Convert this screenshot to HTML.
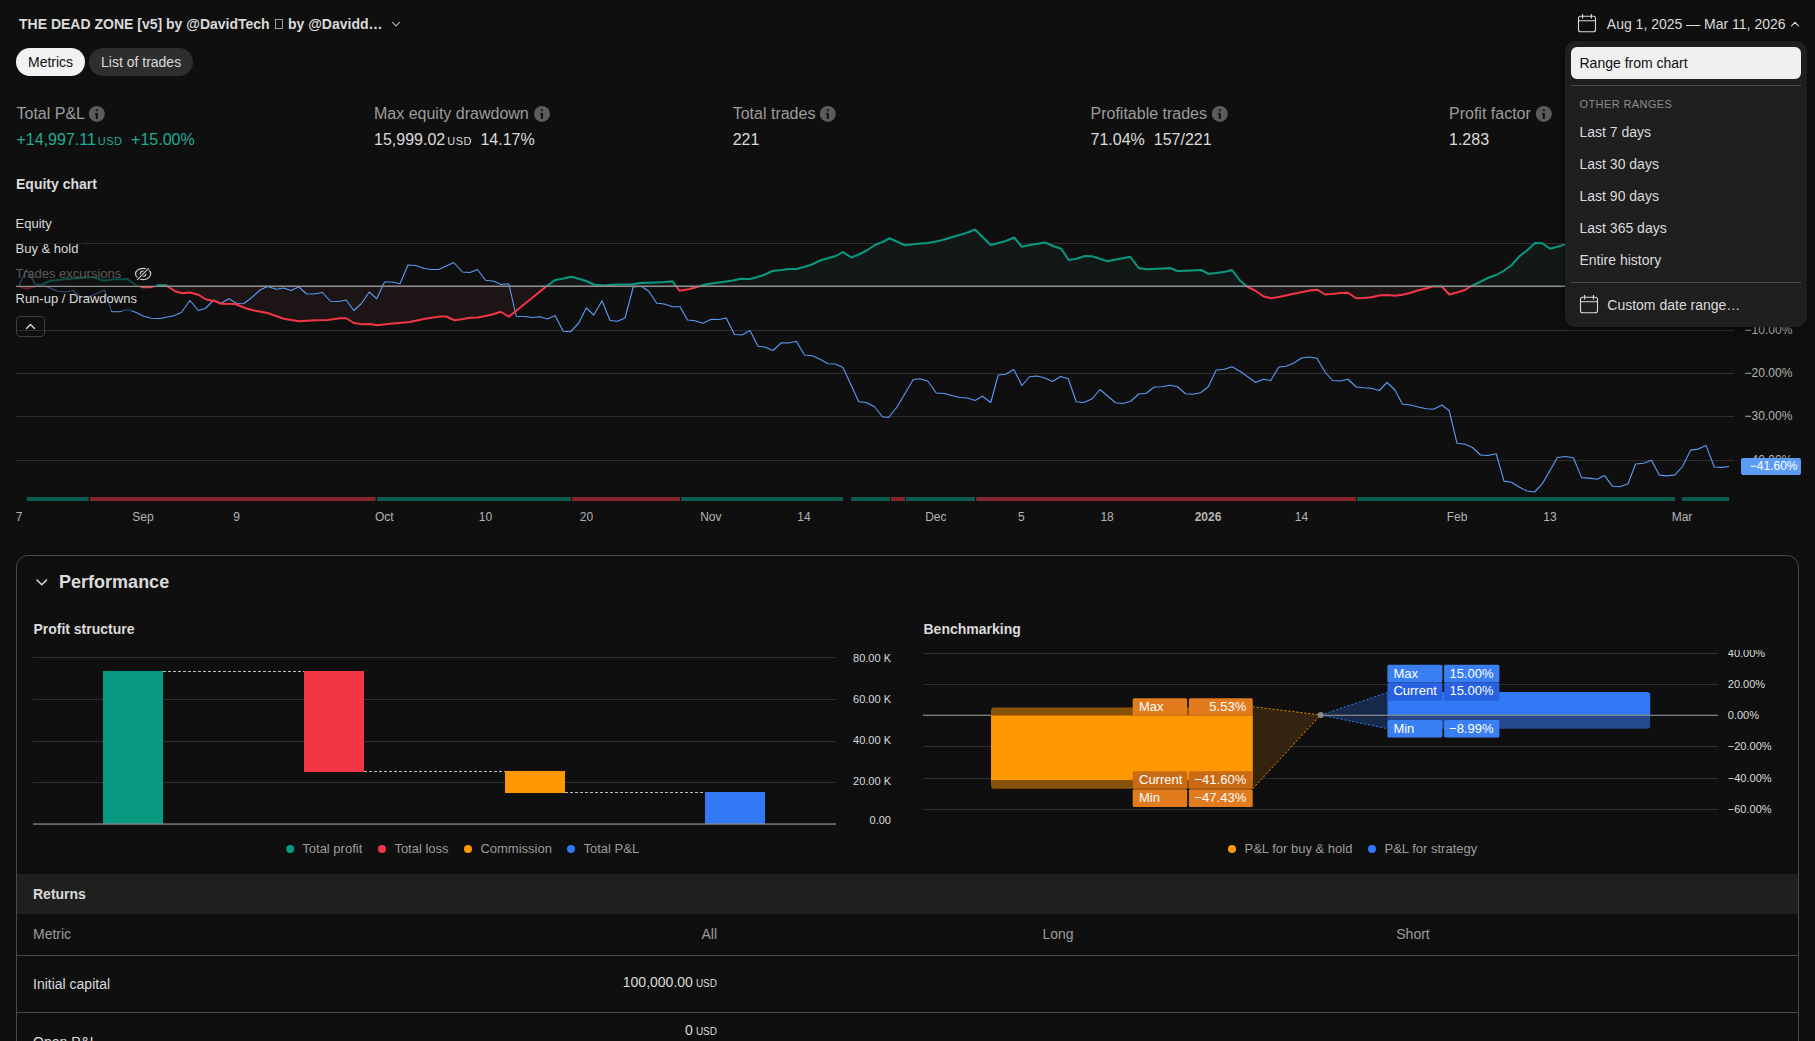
<!DOCTYPE html><html><head><meta charset="utf-8"><style>
html,body{margin:0;padding:0;background:#0f0f0f;width:1815px;height:1041px;overflow:hidden;font-family:"Liberation Sans", sans-serif;}
.t{position:absolute;white-space:nowrap;}
.abs{position:absolute;}
svg{position:absolute;left:0;top:0;}
</style></head><body>
<div class="t" style="left:19.00px;top:14.20px;font-size:14px;line-height:20px;color:#dbdbdb;font-weight:700;">THE DEAD ZONE [v5] by @DavidTech <span style="display:inline-block;width:8px;height:10px;border:1px solid #a0a0a0;box-sizing:border-box;vertical-align:0px;margin:0 1.5px 0 1px"></span> by @Davidd…</div>
<svg width="1815" height="1041" style="pointer-events:none"><path d="M392.5 22.3 L396 25.8 L399.5 22.3" fill="none" stroke="#b8b8b8" stroke-width="1.1" stroke-linecap="round" stroke-linejoin="round"/></svg>
<div class="abs" style="left:16px;top:48px;width:69px;height:28px;border-radius:14px;background:#f2f2f2"></div>
<div class="t" style="left:28.00px;top:52.00px;font-size:14px;line-height:20px;color:#0f0f0f;">Metrics</div>
<div class="abs" style="left:89px;top:48px;width:104px;height:28px;border-radius:14px;background:#2e2e2e"></div>
<div class="t" style="left:101.00px;top:52.00px;font-size:14px;line-height:20px;color:#dbdbdb;">List of trades</div>
<div class="t" style="left:16.50px;top:103.20px;font-size:16px;line-height:22px;color:#9c9c9c;">Total P&amp;L</div>
<svg width="1815" height="1041" style="pointer-events:none"><circle cx="96.80" cy="113.90" r="8" fill="#5b5b5b"/><path d="M95.00 113.10 H97.80 V118.90 H95.80 V114.50 H95.00 Z" fill="#0f0f0f"/><rect x="95.80" y="109.30" width="2" height="1.8" fill="#0f0f0f"/></svg>
<div class="t" style="left:374.00px;top:103.20px;font-size:16px;line-height:22px;color:#9c9c9c;">Max equity drawdown</div>
<svg width="1815" height="1041" style="pointer-events:none"><circle cx="542.00" cy="113.90" r="8" fill="#5b5b5b"/><path d="M540.20 113.10 H543.00 V118.90 H541.00 V114.50 H540.20 Z" fill="#0f0f0f"/><rect x="541.00" y="109.30" width="2" height="1.8" fill="#0f0f0f"/></svg>
<div class="t" style="left:732.70px;top:103.20px;font-size:16px;line-height:22px;color:#9c9c9c;">Total trades</div>
<svg width="1815" height="1041" style="pointer-events:none"><circle cx="827.80" cy="113.90" r="8" fill="#5b5b5b"/><path d="M826.00 113.10 H828.80 V118.90 H826.80 V114.50 H826.00 Z" fill="#0f0f0f"/><rect x="826.80" y="109.30" width="2" height="1.8" fill="#0f0f0f"/></svg>
<div class="t" style="left:1090.50px;top:103.20px;font-size:16px;line-height:22px;color:#9c9c9c;">Profitable trades</div>
<svg width="1815" height="1041" style="pointer-events:none"><circle cx="1219.80" cy="113.90" r="8" fill="#5b5b5b"/><path d="M1218.00 113.10 H1220.80 V118.90 H1218.80 V114.50 H1218.00 Z" fill="#0f0f0f"/><rect x="1218.80" y="109.30" width="2" height="1.8" fill="#0f0f0f"/></svg>
<div class="t" style="left:1449.00px;top:103.20px;font-size:16px;line-height:22px;color:#9c9c9c;">Profit factor</div>
<svg width="1815" height="1041" style="pointer-events:none"><circle cx="1543.80" cy="113.90" r="8" fill="#5b5b5b"/><path d="M1542.00 113.10 H1544.80 V118.90 H1542.80 V114.50 H1542.00 Z" fill="#0f0f0f"/><rect x="1542.80" y="109.30" width="2" height="1.8" fill="#0f0f0f"/></svg>
<div class="t" style="left:16.50px;top:129.00px;font-size:16px;line-height:22px;color:#22ab94;">+14,997.11<span style="font-size:11px;margin-left:2px;letter-spacing:0.5px">USD</span><span style="margin-left:8.5px">+15.00%</span></div>
<div class="t" style="left:374.00px;top:129.00px;font-size:16px;line-height:22px;color:#dbdbdb;">15,999.02<span style="font-size:11px;margin-left:2px;letter-spacing:0.5px">USD</span><span style="margin-left:8.5px">14.17%</span></div>
<div class="t" style="left:732.70px;top:129.00px;font-size:16px;line-height:22px;color:#dbdbdb;">221</div>
<div class="t" style="left:1090.50px;top:129.00px;font-size:16px;line-height:22px;color:#dbdbdb;">71.04%<span style="margin-left:9px">157/221</span></div>
<div class="t" style="left:1449.00px;top:129.00px;font-size:16px;line-height:22px;color:#dbdbdb;">1.283</div>
<div class="t" style="left:16.00px;top:174.00px;font-size:14px;line-height:20px;color:#dbdbdb;font-weight:700;">Equity chart</div>
<svg width="1815" height="1041"><defs><clipPath id="above"><rect x="0" y="0" width="1815" height="286.25"/></clipPath><clipPath id="below"><rect x="0" y="286.25" width="1815" height="400"/></clipPath></defs><rect x="16" y="243" width="1718" height="1" fill="#2e2e2e"/><rect x="16" y="330" width="1718" height="1" fill="#2e2e2e"/><rect x="16" y="373" width="1718" height="1" fill="#2e2e2e"/><rect x="16" y="416" width="1718" height="1" fill="#2e2e2e"/><rect x="16" y="460" width="1718" height="1" fill="#2e2e2e"/><polygon points="18.80,286.25 18.80,286.25 26.50,288.60 35.00,286.25 41.25,285.00 50.00,280.75 65.00,279.25 80.00,278.00 92.50,277.00 103.75,280.50 115.00,279.25 127.50,279.00 136.25,285.50 142.50,287.30 150.00,287.30 157.50,285.30 166.25,285.30 175.00,291.25 182.50,293.25 190.00,292.50 198.75,295.00 206.25,299.50 215.00,301.25 221.25,303.75 235.00,304.00 245.00,308.00 255.00,310.75 267.50,313.00 283.75,318.75 298.75,321.25 315.00,320.25 327.50,320.00 340.00,318.25 346.25,318.25 353.75,323.00 362.50,324.25 370.00,324.00 377.50,325.25 390.00,323.75 410.00,322.00 425.00,318.75 440.00,316.50 446.25,316.50 454.50,320.25 462.00,319.25 470.00,317.75 477.50,317.50 485.50,316.00 493.25,314.25 500.75,311.75 508.75,316.75 547.50,285.50 555.00,280.00 562.50,278.75 571.25,276.75 578.75,278.75 586.25,281.00 593.75,284.50 602.50,285.50 617.50,284.50 632.50,284.25 640.00,283.00 655.00,282.50 665.00,282.00 672.50,281.25 679.50,290.75 688.75,289.25 698.75,286.50 705.00,284.50 715.00,283.00 722.50,282.00 732.50,280.50 741.25,278.75 750.00,279.00 757.50,277.00 765.00,274.50 772.50,271.00 781.25,270.00 788.75,269.00 796.25,269.00 805.00,266.75 812.50,264.25 820.00,260.50 828.75,258.00 836.25,255.75 843.00,252.00 851.25,257.50 858.75,254.50 866.25,250.75 875.00,245.00 882.50,242.00 889.50,238.25 905.00,245.25 917.50,243.75 927.50,243.00 935.00,241.75 942.50,240.00 952.50,237.00 966.25,233.00 975.00,229.50 990.75,245.00 1005.00,241.25 1014.25,237.50 1021.75,246.75 1030.00,245.00 1045.00,242.50 1053.75,246.25 1061.25,248.75 1068.75,260.00 1076.25,258.75 1085.00,256.00 1092.00,256.25 1107.50,261.25 1130.00,256.75 1138.75,268.00 1146.25,269.25 1162.50,268.50 1170.00,268.00 1177.50,271.00 1186.25,270.75 1201.25,270.00 1208.75,274.00 1225.00,271.75 1232.00,270.00 1240.00,280.50 1247.00,286.50 1255.00,290.50 1263.75,296.50 1271.25,298.25 1280.00,296.75 1295.00,293.50 1310.00,290.50 1317.50,289.75 1325.00,294.50 1332.50,294.00 1340.00,293.00 1348.00,292.75 1356.25,298.25 1363.75,298.00 1371.25,297.25 1379.25,295.50 1387.00,295.00 1395.00,295.75 1402.50,294.75 1410.00,293.00 1417.50,290.50 1425.00,288.75 1433.75,286.25 1441.75,286.50 1449.25,294.50 1457.00,292.50 1465.00,290.00 1470.00,286.75 1480.00,282.00 1488.75,277.50 1496.25,275.00 1503.75,270.75 1511.25,265.50 1520.00,255.75 1527.50,250.00 1535.00,243.00 1542.50,243.25 1550.00,248.75 1565.00,244.50 1600.00,240.00 1650.00,236.00 1700.00,232.00 1729.00,234.00 1729.00,286.25" fill="#111816" clip-path="url(#above)"/><polygon points="18.80,286.25 18.80,286.25 26.50,288.60 35.00,286.25 41.25,285.00 50.00,280.75 65.00,279.25 80.00,278.00 92.50,277.00 103.75,280.50 115.00,279.25 127.50,279.00 136.25,285.50 142.50,287.30 150.00,287.30 157.50,285.30 166.25,285.30 175.00,291.25 182.50,293.25 190.00,292.50 198.75,295.00 206.25,299.50 215.00,301.25 221.25,303.75 235.00,304.00 245.00,308.00 255.00,310.75 267.50,313.00 283.75,318.75 298.75,321.25 315.00,320.25 327.50,320.00 340.00,318.25 346.25,318.25 353.75,323.00 362.50,324.25 370.00,324.00 377.50,325.25 390.00,323.75 410.00,322.00 425.00,318.75 440.00,316.50 446.25,316.50 454.50,320.25 462.00,319.25 470.00,317.75 477.50,317.50 485.50,316.00 493.25,314.25 500.75,311.75 508.75,316.75 547.50,285.50 555.00,280.00 562.50,278.75 571.25,276.75 578.75,278.75 586.25,281.00 593.75,284.50 602.50,285.50 617.50,284.50 632.50,284.25 640.00,283.00 655.00,282.50 665.00,282.00 672.50,281.25 679.50,290.75 688.75,289.25 698.75,286.50 705.00,284.50 715.00,283.00 722.50,282.00 732.50,280.50 741.25,278.75 750.00,279.00 757.50,277.00 765.00,274.50 772.50,271.00 781.25,270.00 788.75,269.00 796.25,269.00 805.00,266.75 812.50,264.25 820.00,260.50 828.75,258.00 836.25,255.75 843.00,252.00 851.25,257.50 858.75,254.50 866.25,250.75 875.00,245.00 882.50,242.00 889.50,238.25 905.00,245.25 917.50,243.75 927.50,243.00 935.00,241.75 942.50,240.00 952.50,237.00 966.25,233.00 975.00,229.50 990.75,245.00 1005.00,241.25 1014.25,237.50 1021.75,246.75 1030.00,245.00 1045.00,242.50 1053.75,246.25 1061.25,248.75 1068.75,260.00 1076.25,258.75 1085.00,256.00 1092.00,256.25 1107.50,261.25 1130.00,256.75 1138.75,268.00 1146.25,269.25 1162.50,268.50 1170.00,268.00 1177.50,271.00 1186.25,270.75 1201.25,270.00 1208.75,274.00 1225.00,271.75 1232.00,270.00 1240.00,280.50 1247.00,286.50 1255.00,290.50 1263.75,296.50 1271.25,298.25 1280.00,296.75 1295.00,293.50 1310.00,290.50 1317.50,289.75 1325.00,294.50 1332.50,294.00 1340.00,293.00 1348.00,292.75 1356.25,298.25 1363.75,298.00 1371.25,297.25 1379.25,295.50 1387.00,295.00 1395.00,295.75 1402.50,294.75 1410.00,293.00 1417.50,290.50 1425.00,288.75 1433.75,286.25 1441.75,286.50 1449.25,294.50 1457.00,292.50 1465.00,290.00 1470.00,286.75 1480.00,282.00 1488.75,277.50 1496.25,275.00 1503.75,270.75 1511.25,265.50 1520.00,255.75 1527.50,250.00 1535.00,243.00 1542.50,243.25 1550.00,248.75 1565.00,244.50 1600.00,240.00 1650.00,236.00 1700.00,232.00 1729.00,234.00 1729.00,286.25" fill="#1c1415" clip-path="url(#below)"/><polyline points="18.80,286.25 26.50,269.80 35.00,283.75 41.25,285.00 48.75,287.50 57.50,291.25 65.00,292.00 72.50,290.50 80.00,296.25 86.25,297.50 96.25,293.75 104.50,290.00 111.75,311.75 118.75,311.75 128.00,309.50 136.25,312.50 143.75,316.25 151.25,318.25 160.00,318.50 173.75,315.75 181.25,312.50 190.00,300.50 198.25,310.50 205.50,308.25 213.75,300.00 221.25,303.25 228.75,298.75 237.50,303.75 243.75,303.50 251.25,298.00 260.00,290.00 267.50,286.50 276.25,289.25 283.75,288.00 291.25,290.50 298.75,286.75 306.25,293.75 313.75,294.00 322.50,292.50 330.50,301.25 338.75,301.50 346.25,300.00 353.75,310.50 361.25,303.75 369.25,292.00 376.75,298.75 384.50,282.00 392.50,282.00 400.00,283.75 408.00,265.00 415.50,265.50 423.75,268.25 431.25,269.50 438.75,269.50 453.75,262.50 462.50,272.00 470.00,272.50 477.50,269.50 485.50,280.25 493.75,281.25 501.25,284.50 508.75,283.75 516.25,316.25 525.00,316.50 532.50,317.50 540.00,316.75 547.50,319.00 555.00,315.50 563.25,331.25 570.50,331.75 578.75,323.00 586.25,308.00 593.75,315.00 602.00,300.75 610.00,320.50 617.50,321.25 625.00,318.00 633.25,287.00 641.25,286.25 648.75,291.25 656.75,303.25 664.25,304.00 672.50,306.75 680.00,306.75 687.50,320.00 695.00,320.75 703.00,323.25 711.25,319.25 718.75,319.50 726.25,318.00 734.50,334.50 742.00,335.00 750.00,330.50 758.00,346.25 765.50,347.25 773.00,350.50 781.25,342.75 788.75,343.00 796.25,341.25 804.50,355.00 812.50,355.75 820.00,359.25 828.00,363.75 835.50,364.00 843.00,367.50 858.75,401.75 866.25,402.50 874.50,406.75 882.50,416.75 888.75,417.50 897.00,407.00 913.25,379.50 920.00,378.75 928.00,381.25 936.25,393.00 944.50,393.50 952.50,395.75 960.00,397.50 967.50,398.00 975.00,400.50 982.50,396.25 990.75,402.50 998.25,375.00 1005.75,374.25 1013.75,369.50 1022.00,385.50 1029.50,376.75 1037.00,376.00 1045.00,378.00 1052.50,381.50 1060.50,376.50 1068.25,378.75 1076.25,401.75 1083.75,402.50 1092.00,399.00 1100.00,389.50 1115.50,402.75 1123.00,403.50 1130.75,401.25 1138.75,394.00 1146.25,393.25 1154.25,387.00 1161.75,386.75 1170.00,385.25 1177.50,386.75 1185.50,393.75 1193.00,394.25 1200.75,392.75 1208.25,386.75 1216.25,370.00 1223.75,369.50 1232.00,366.75 1240.00,371.25 1255.75,382.50 1263.25,379.25 1270.75,380.50 1278.75,367.00 1286.25,366.25 1294.25,362.75 1302.00,357.75 1309.50,357.00 1317.00,358.25 1325.00,372.00 1332.50,380.50 1340.00,381.00 1348.00,379.25 1356.25,387.00 1363.75,387.75 1371.25,388.25 1379.25,390.50 1387.00,382.50 1395.00,390.00 1402.50,404.25 1410.50,405.00 1418.25,407.00 1426.25,408.75 1433.75,409.25 1441.75,405.00 1449.25,410.75 1457.00,443.25 1465.00,444.25 1472.50,447.50 1480.50,455.00 1488.00,455.50 1496.25,453.75 1504.00,481.10 1511.40,482.30 1519.60,487.30 1527.00,491.00 1534.50,492.00 1542.40,483.60 1557.50,457.50 1565.50,456.50 1573.40,457.80 1581.60,477.60 1589.50,478.10 1597.00,479.30 1604.60,475.60 1612.60,486.30 1620.00,486.80 1628.00,483.80 1635.60,464.00 1643.60,463.20 1651.50,460.30 1659.20,475.10 1667.10,475.90 1675.10,474.90 1682.50,466.50 1690.70,450.10 1698.10,449.10 1706.00,445.40 1714.30,467.00 1721.70,467.40 1729.10,466.50" fill="none" stroke="#5b9cf6" stroke-width="1.1" stroke-linejoin="round"/><polyline points="18.80,286.25 26.50,288.60 35.00,286.25 41.25,285.00 50.00,280.75 65.00,279.25 80.00,278.00 92.50,277.00 103.75,280.50 115.00,279.25 127.50,279.00 136.25,285.50 142.50,287.30 150.00,287.30 157.50,285.30 166.25,285.30 175.00,291.25 182.50,293.25 190.00,292.50 198.75,295.00 206.25,299.50 215.00,301.25 221.25,303.75 235.00,304.00 245.00,308.00 255.00,310.75 267.50,313.00 283.75,318.75 298.75,321.25 315.00,320.25 327.50,320.00 340.00,318.25 346.25,318.25 353.75,323.00 362.50,324.25 370.00,324.00 377.50,325.25 390.00,323.75 410.00,322.00 425.00,318.75 440.00,316.50 446.25,316.50 454.50,320.25 462.00,319.25 470.00,317.75 477.50,317.50 485.50,316.00 493.25,314.25 500.75,311.75 508.75,316.75 547.50,285.50 555.00,280.00 562.50,278.75 571.25,276.75 578.75,278.75 586.25,281.00 593.75,284.50 602.50,285.50 617.50,284.50 632.50,284.25 640.00,283.00 655.00,282.50 665.00,282.00 672.50,281.25 679.50,290.75 688.75,289.25 698.75,286.50 705.00,284.50 715.00,283.00 722.50,282.00 732.50,280.50 741.25,278.75 750.00,279.00 757.50,277.00 765.00,274.50 772.50,271.00 781.25,270.00 788.75,269.00 796.25,269.00 805.00,266.75 812.50,264.25 820.00,260.50 828.75,258.00 836.25,255.75 843.00,252.00 851.25,257.50 858.75,254.50 866.25,250.75 875.00,245.00 882.50,242.00 889.50,238.25 905.00,245.25 917.50,243.75 927.50,243.00 935.00,241.75 942.50,240.00 952.50,237.00 966.25,233.00 975.00,229.50 990.75,245.00 1005.00,241.25 1014.25,237.50 1021.75,246.75 1030.00,245.00 1045.00,242.50 1053.75,246.25 1061.25,248.75 1068.75,260.00 1076.25,258.75 1085.00,256.00 1092.00,256.25 1107.50,261.25 1130.00,256.75 1138.75,268.00 1146.25,269.25 1162.50,268.50 1170.00,268.00 1177.50,271.00 1186.25,270.75 1201.25,270.00 1208.75,274.00 1225.00,271.75 1232.00,270.00 1240.00,280.50 1247.00,286.50 1255.00,290.50 1263.75,296.50 1271.25,298.25 1280.00,296.75 1295.00,293.50 1310.00,290.50 1317.50,289.75 1325.00,294.50 1332.50,294.00 1340.00,293.00 1348.00,292.75 1356.25,298.25 1363.75,298.00 1371.25,297.25 1379.25,295.50 1387.00,295.00 1395.00,295.75 1402.50,294.75 1410.00,293.00 1417.50,290.50 1425.00,288.75 1433.75,286.25 1441.75,286.50 1449.25,294.50 1457.00,292.50 1465.00,290.00 1470.00,286.75 1480.00,282.00 1488.75,277.50 1496.25,275.00 1503.75,270.75 1511.25,265.50 1520.00,255.75 1527.50,250.00 1535.00,243.00 1542.50,243.25 1550.00,248.75 1565.00,244.50 1600.00,240.00 1650.00,236.00 1700.00,232.00 1729.00,234.00" fill="none" stroke="#089981" stroke-width="2" stroke-linejoin="round" clip-path="url(#above)"/><polyline points="18.80,286.25 26.50,288.60 35.00,286.25 41.25,285.00 50.00,280.75 65.00,279.25 80.00,278.00 92.50,277.00 103.75,280.50 115.00,279.25 127.50,279.00 136.25,285.50 142.50,287.30 150.00,287.30 157.50,285.30 166.25,285.30 175.00,291.25 182.50,293.25 190.00,292.50 198.75,295.00 206.25,299.50 215.00,301.25 221.25,303.75 235.00,304.00 245.00,308.00 255.00,310.75 267.50,313.00 283.75,318.75 298.75,321.25 315.00,320.25 327.50,320.00 340.00,318.25 346.25,318.25 353.75,323.00 362.50,324.25 370.00,324.00 377.50,325.25 390.00,323.75 410.00,322.00 425.00,318.75 440.00,316.50 446.25,316.50 454.50,320.25 462.00,319.25 470.00,317.75 477.50,317.50 485.50,316.00 493.25,314.25 500.75,311.75 508.75,316.75 547.50,285.50 555.00,280.00 562.50,278.75 571.25,276.75 578.75,278.75 586.25,281.00 593.75,284.50 602.50,285.50 617.50,284.50 632.50,284.25 640.00,283.00 655.00,282.50 665.00,282.00 672.50,281.25 679.50,290.75 688.75,289.25 698.75,286.50 705.00,284.50 715.00,283.00 722.50,282.00 732.50,280.50 741.25,278.75 750.00,279.00 757.50,277.00 765.00,274.50 772.50,271.00 781.25,270.00 788.75,269.00 796.25,269.00 805.00,266.75 812.50,264.25 820.00,260.50 828.75,258.00 836.25,255.75 843.00,252.00 851.25,257.50 858.75,254.50 866.25,250.75 875.00,245.00 882.50,242.00 889.50,238.25 905.00,245.25 917.50,243.75 927.50,243.00 935.00,241.75 942.50,240.00 952.50,237.00 966.25,233.00 975.00,229.50 990.75,245.00 1005.00,241.25 1014.25,237.50 1021.75,246.75 1030.00,245.00 1045.00,242.50 1053.75,246.25 1061.25,248.75 1068.75,260.00 1076.25,258.75 1085.00,256.00 1092.00,256.25 1107.50,261.25 1130.00,256.75 1138.75,268.00 1146.25,269.25 1162.50,268.50 1170.00,268.00 1177.50,271.00 1186.25,270.75 1201.25,270.00 1208.75,274.00 1225.00,271.75 1232.00,270.00 1240.00,280.50 1247.00,286.50 1255.00,290.50 1263.75,296.50 1271.25,298.25 1280.00,296.75 1295.00,293.50 1310.00,290.50 1317.50,289.75 1325.00,294.50 1332.50,294.00 1340.00,293.00 1348.00,292.75 1356.25,298.25 1363.75,298.00 1371.25,297.25 1379.25,295.50 1387.00,295.00 1395.00,295.75 1402.50,294.75 1410.00,293.00 1417.50,290.50 1425.00,288.75 1433.75,286.25 1441.75,286.50 1449.25,294.50 1457.00,292.50 1465.00,290.00 1470.00,286.75 1480.00,282.00 1488.75,277.50 1496.25,275.00 1503.75,270.75 1511.25,265.50 1520.00,255.75 1527.50,250.00 1535.00,243.00 1542.50,243.25 1550.00,248.75 1565.00,244.50 1600.00,240.00 1650.00,236.00 1700.00,232.00 1729.00,234.00" fill="none" stroke="#f23645" stroke-width="2" stroke-linejoin="round" clip-path="url(#below)"/><rect x="16" y="285.45" width="1718" height="1.6" fill="#8f8f8f"/><rect x="26.80" y="497" width="62.00" height="4" fill="#0b5c4e"/><rect x="90.00" y="497" width="285.60" height="4" fill="#86242d"/><rect x="376.90" y="497" width="194.10" height="4" fill="#0b5c4e"/><rect x="572.00" y="497" width="108.10" height="4" fill="#86242d"/><rect x="681.10" y="497" width="161.90" height="4" fill="#0b5c4e"/><rect x="851.20" y="497" width="38.80" height="4" fill="#0b5c4e"/><rect x="890.90" y="497" width="14.10" height="4" fill="#86242d"/><rect x="906.00" y="497" width="69.00" height="4" fill="#0b5c4e"/><rect x="976.20" y="497" width="379.80" height="4" fill="#86242d"/><rect x="1357.00" y="497" width="318.00" height="4" fill="#0b5c4e"/><rect x="1682.00" y="497" width="47.00" height="4" fill="#0b5c4e"/></svg>
<div class="abs" style="left:6px;top:236.5px;width:76px;height:24px;background:rgba(15,15,15,0.55)"></div>
<div class="abs" style="left:6px;top:261.5px;width:151px;height:24px;background:rgba(15,15,15,0.55)"></div>
<div class="abs" style="left:6px;top:286.7px;width:135px;height:24px;background:rgba(15,15,15,0.55)"></div>
<div class="t" style="left:15.50px;top:214.60px;font-size:13px;line-height:18px;color:#dbdbdb;">Equity</div>
<div class="t" style="left:15.50px;top:239.50px;font-size:13px;line-height:18px;color:#dbdbdb;">Buy &amp; hold</div>
<div class="t" style="left:15.50px;top:264.50px;font-size:13px;line-height:18px;color:#5a5a5a;">Trades excursions</div>
<div class="t" style="left:15.50px;top:289.70px;font-size:13px;line-height:18px;color:#dbdbdb;">Run-up / Drawdowns</div>
<svg width="1815" height="1041"><g fill="none" stroke="#c8c8c8" stroke-width="1.2" stroke-linecap="round"><ellipse cx="143.1" cy="274" rx="7.6" ry="5.6"/><circle cx="143" cy="273.8" r="2.7"/></g><path d="M137.4 279.6 L148.6 268.4" stroke="#0f0f0f" stroke-width="3.2"/><path d="M137.4 279.6 L148.6 268.4" stroke="#c8c8c8" stroke-width="1.2" stroke-linecap="round"/></svg>
<div class="abs" style="left:16px;top:316px;width:29px;height:21px;box-sizing:border-box;border:1px solid #3d3d3d;border-radius:4px;"></div>
<svg width="1815" height="1041"><path d="M26.5 328.5 L30.5 324.5 L34.5 328.5" fill="none" stroke="#dbdbdb" stroke-width="1.4" stroke-linecap="round" stroke-linejoin="round"/></svg>
<div class="t" style="left:1744.60px;top:322.20px;font-size:12px;line-height:17px;color:#b4b4b4;">−10.00%</div>
<div class="t" style="left:1744.60px;top:365.20px;font-size:12px;line-height:17px;color:#b4b4b4;">−20.00%</div>
<div class="t" style="left:1744.60px;top:408.30px;font-size:12px;line-height:17px;color:#b4b4b4;">−30.00%</div>
<div class="t" style="left:1744.60px;top:452.20px;font-size:12px;line-height:17px;color:#b4b4b4;">−40.00%</div>
<div class="abs" style="left:1741px;top:458px;width:60px;height:17px;background:#5b9cf6;border-radius:2px"></div>
<div class="t" style="right:17.50px;top:458.00px;font-size:12px;line-height:17px;color:#ffffff;">−41.60%</div>
<div class="t" style="left:19.10px;transform:translateX(-50%);top:508.70px;font-size:12px;line-height:17px;color:#b4b4b4;">7</div>
<div class="t" style="left:143.00px;transform:translateX(-50%);top:508.70px;font-size:12px;line-height:17px;color:#b4b4b4;">Sep</div>
<div class="t" style="left:236.50px;transform:translateX(-50%);top:508.70px;font-size:12px;line-height:17px;color:#b4b4b4;">9</div>
<div class="t" style="left:384.30px;transform:translateX(-50%);top:508.70px;font-size:12px;line-height:17px;color:#b4b4b4;">Oct</div>
<div class="t" style="left:485.50px;transform:translateX(-50%);top:508.70px;font-size:12px;line-height:17px;color:#b4b4b4;">10</div>
<div class="t" style="left:586.40px;transform:translateX(-50%);top:508.70px;font-size:12px;line-height:17px;color:#b4b4b4;">20</div>
<div class="t" style="left:710.80px;transform:translateX(-50%);top:508.70px;font-size:12px;line-height:17px;color:#b4b4b4;">Nov</div>
<div class="t" style="left:804.00px;transform:translateX(-50%);top:508.70px;font-size:12px;line-height:17px;color:#b4b4b4;">14</div>
<div class="t" style="left:935.80px;transform:translateX(-50%);top:508.70px;font-size:12px;line-height:17px;color:#b4b4b4;">Dec</div>
<div class="t" style="left:1021.30px;transform:translateX(-50%);top:508.70px;font-size:12px;line-height:17px;color:#b4b4b4;">5</div>
<div class="t" style="left:1107.10px;transform:translateX(-50%);top:508.70px;font-size:12px;line-height:17px;color:#b4b4b4;">18</div>
<div class="t" style="left:1208.00px;transform:translateX(-50%);top:508.70px;font-size:12px;line-height:17px;color:#b4b4b4;font-weight:700;">2026</div>
<div class="t" style="left:1301.50px;transform:translateX(-50%);top:508.70px;font-size:12px;line-height:17px;color:#b4b4b4;">14</div>
<div class="t" style="left:1457.00px;transform:translateX(-50%);top:508.70px;font-size:12px;line-height:17px;color:#b4b4b4;">Feb</div>
<div class="t" style="left:1550.00px;transform:translateX(-50%);top:508.70px;font-size:12px;line-height:17px;color:#b4b4b4;">13</div>
<div class="t" style="left:1682.00px;transform:translateX(-50%);top:508.70px;font-size:12px;line-height:17px;color:#b4b4b4;">Mar</div>
<svg width="1815" height="1041"><g fill="none" stroke="#dbdbdb" stroke-width="1.1"><rect x="1578.5" y="16.3" width="17" height="15.5" rx="2"/><path d="M1578.5 20.8 H1595.5 M1582.6 14.0 V18.5 M1591.4 14.0 V18.5"/></g><path d="M1791.5 25.8 L1795 22.3 L1798.5 25.8" fill="none" stroke="#dbdbdb" stroke-width="1.1" stroke-linecap="round" stroke-linejoin="round"/></svg>
<div class="t" style="left:1606.80px;top:14.10px;font-size:14px;line-height:20px;color:#dbdbdb;">Aug 1, 2025 — Mar 11, 2026</div>
<div class="abs" style="left:1565px;top:41px;width:242px;height:286px;background:#1f1f1f;border-radius:10px;box-shadow:0 2px 8px rgba(0,0,0,0.4)"></div>
<div class="abs" style="left:1571px;top:47px;width:230px;height:32px;background:#f0f0f0;border-radius:6px"></div>
<div class="t" style="left:1579.50px;top:52.70px;font-size:14px;line-height:20px;color:#0f0f0f;">Range from chart</div>
<div class="abs" style="left:1571px;top:85px;width:230px;height:1px;background:#4a4a4a"></div>
<div class="t" style="left:1579.50px;top:96.50px;font-size:11px;line-height:15px;color:#8c8c8c;letter-spacing:0.4px;">OTHER RANGES</div>
<div class="t" style="left:1579.50px;top:121.90px;font-size:14px;line-height:20px;color:#dbdbdb;">Last 7 days</div>
<div class="t" style="left:1579.50px;top:154.00px;font-size:14px;line-height:20px;color:#dbdbdb;">Last 30 days</div>
<div class="t" style="left:1579.50px;top:185.50px;font-size:14px;line-height:20px;color:#dbdbdb;">Last 90 days</div>
<div class="t" style="left:1579.50px;top:218.20px;font-size:14px;line-height:20px;color:#dbdbdb;">Last 365 days</div>
<div class="t" style="left:1579.50px;top:250.00px;font-size:14px;line-height:20px;color:#dbdbdb;">Entire history</div>
<div class="abs" style="left:1571px;top:282px;width:230px;height:1px;background:#4a4a4a"></div>
<svg width="1815" height="1041"><g fill="none" stroke="#dbdbdb" stroke-width="1.1"><rect x="1580.5" y="297.3" width="17" height="15.5" rx="2"/><path d="M1580.5 301.8 H1597.5 M1584.6 295.0 V299.5 M1593.4 295.0 V299.5"/></g></svg>
<div class="t" style="left:1607.30px;top:295.30px;font-size:14px;line-height:20px;color:#dbdbdb;">Custom date range…</div>
<div class="abs" style="left:16px;top:555px;width:1783px;height:600px;box-sizing:border-box;border:1px solid #4a4a4a;border-radius:12px"></div>
<svg width="1815" height="1041"><path d="M37 580 L41.8 584.8 L46.6 580" fill="none" stroke="#dbdbdb" stroke-width="1.5" stroke-linecap="round" stroke-linejoin="round"/></svg>
<div class="t" style="left:59.10px;top:570.40px;font-size:18px;line-height:25px;color:#dbdbdb;font-weight:700;">Performance</div>
<div class="t" style="left:33.40px;top:619.10px;font-size:14px;line-height:20px;color:#dbdbdb;font-weight:700;">Profit structure</div>
<div class="t" style="left:923.50px;top:619.10px;font-size:14px;line-height:20px;color:#dbdbdb;font-weight:700;">Benchmarking</div>
<svg width="1815" height="1041"><rect x="33" y="657" width="803" height="1" fill="#2e2e2e"/><rect x="33" y="699" width="803" height="1" fill="#2e2e2e"/><rect x="33" y="741" width="803" height="1" fill="#2e2e2e"/><rect x="33" y="782" width="803" height="1" fill="#2e2e2e"/><rect x="103" y="671" width="60" height="153" fill="#089981"/><rect x="304" y="671" width="60" height="101" fill="#f23645"/><rect x="505" y="771" width="60" height="22" fill="#ff9800"/><rect x="705" y="792" width="60" height="32" fill="#3179f5"/><line x1="163" y1="671.5" x2="304" y2="671.5" stroke="#bdbdbd" stroke-width="1" stroke-dasharray="3 2"/><line x1="364" y1="771.5" x2="505" y2="771.5" stroke="#bdbdbd" stroke-width="1" stroke-dasharray="3 2"/><line x1="565" y1="792.5" x2="705" y2="792.5" stroke="#bdbdbd" stroke-width="1" stroke-dasharray="3 2"/><rect x="33" y="823.4" width="803" height="1.3" fill="#8a8a8a"/></svg>
<div class="t" style="right:924.00px;top:650.80px;font-size:11px;line-height:15px;color:#dbdbdb;">80.00 K</div>
<div class="t" style="right:924.00px;top:691.70px;font-size:11px;line-height:15px;color:#dbdbdb;">60.00 K</div>
<div class="t" style="right:924.00px;top:733.00px;font-size:11px;line-height:15px;color:#dbdbdb;">40.00 K</div>
<div class="t" style="right:924.00px;top:774.00px;font-size:11px;line-height:15px;color:#dbdbdb;">20.00 K</div>
<div class="t" style="right:924.00px;top:812.60px;font-size:11px;line-height:15px;color:#dbdbdb;">0.00</div>
<svg width="1815" height="1041"><circle cx="290.2" cy="849" r="4" fill="#089981"/><circle cx="382" cy="849" r="4" fill="#f23645"/><circle cx="468" cy="849" r="4" fill="#ff9800"/><circle cx="571" cy="849" r="4" fill="#3179f5"/></svg>
<div class="t" style="left:302.30px;top:839.50px;font-size:13px;line-height:18px;color:#9c9c9c;">Total profit</div>
<div class="t" style="left:394.40px;top:839.50px;font-size:13px;line-height:18px;color:#9c9c9c;">Total loss</div>
<div class="t" style="left:480.40px;top:839.50px;font-size:13px;line-height:18px;color:#9c9c9c;">Commission</div>
<div class="t" style="left:583.50px;top:839.50px;font-size:13px;line-height:18px;color:#9c9c9c;">Total P&amp;L</div>
<svg width="1815" height="1041"><rect x="923" y="653" width="795" height="1" fill="#2e2e2e"/><rect x="923" y="684" width="795" height="1" fill="#2e2e2e"/><rect x="923" y="746" width="795" height="1" fill="#2e2e2e"/><rect x="923" y="778" width="795" height="1" fill="#2e2e2e"/><rect x="923" y="809" width="795" height="1" fill="#2e2e2e"/><polygon points="1387.4,692.5 1321,715 1387.4,728.7" fill="#172a4a"/><path d="M1387.4 715 H1650.2 V725.7 Q1650.2 728.7 1647.2 728.7 H1390.4 Q1387.4 728.7 1387.4 725.7 Z" fill="#234a8c"/><path d="M1387.4 715 V695 Q1387.4 692 1390.4 692 H1647.2 Q1650.2 692 1650.2 695 V715 Z" fill="#3179f5"/><line x1="1321" y1="715" x2="1387.4" y2="692.5" stroke="#3179f5" stroke-width="1" stroke-dasharray="2 2"/><line x1="1321" y1="715" x2="1387.4" y2="728.7" stroke="#3179f5" stroke-width="1" stroke-dasharray="2 2"/><rect x="923" y="714.7" width="795" height="1.2" fill="#8a8a8a"/><polygon points="1252.7,707.4 1320.6,715 1252.7,788.7" fill="#33230f"/><rect x="991" y="707.4" width="261.7" height="81.3" rx="3" fill="#875207"/><rect x="991" y="715.5" width="261.7" height="64.5" fill="#ff9800"/><line x1="1252.7" y1="706.7" x2="1320.6" y2="715" stroke="#ff9800" stroke-width="1" stroke-dasharray="2 2"/><line x1="1252.7" y1="788.7" x2="1320.6" y2="715" stroke="#ff9800" stroke-width="1" stroke-dasharray="2 2"/><circle cx="1320.8" cy="715" r="3" fill="#8a8a8a"/><rect x="1132.7" y="698.2" width="54.5" height="17.299999999999955" rx="1.5" fill="#e17b1d"/><rect x="1188.9" y="698.2" width="63.8" height="17.299999999999955" rx="1.5" fill="#e17b1d"/><rect x="1132.7" y="771.3" width="54.5" height="17.40000000000009" rx="1.5" fill="#c96b15"/><rect x="1188.9" y="771.3" width="63.8" height="17.40000000000009" rx="1.5" fill="#c96b15"/><rect x="1132.7" y="789.3" width="54.5" height="17.600000000000023" rx="1.5" fill="#e17b1d"/><rect x="1188.9" y="789.3" width="63.8" height="17.600000000000023" rx="1.5" fill="#e17b1d"/><rect x="1387.4" y="664.8" width="55.0" height="17.800000000000068" rx="1.5" fill="#3a7ef3"/><rect x="1444.1000000000001" y="664.8" width="55.3" height="17.800000000000068" rx="1.5" fill="#3a7ef3"/><rect x="1387.4" y="682.6" width="55.0" height="18.199999999999932" rx="1.5" fill="#2962e0"/><rect x="1444.1000000000001" y="682.6" width="55.3" height="18.199999999999932" rx="1.5" fill="#2962e0"/><rect x="1387.4" y="720" width="55.0" height="17.600000000000023" rx="1.5" fill="#3a7ef3"/><rect x="1444.1000000000001" y="720" width="55.3" height="17.600000000000023" rx="1.5" fill="#3a7ef3"/></svg>
<div class="t" style="left:1139.00px;top:697.60px;font-size:13px;line-height:18px;color:#ffffff;">Max</div>
<div class="t" style="right:568.80px;top:697.60px;font-size:13px;line-height:18px;color:#ffffff;">5.53%</div>
<div class="t" style="left:1139.00px;top:771.00px;font-size:13px;line-height:18px;color:#ffffff;">Current</div>
<div class="t" style="right:568.80px;top:771.00px;font-size:13px;line-height:18px;color:#ffffff;">−41.60%</div>
<div class="t" style="left:1139.00px;top:789.00px;font-size:13px;line-height:18px;color:#ffffff;">Min</div>
<div class="t" style="right:568.80px;top:789.00px;font-size:13px;line-height:18px;color:#ffffff;">−47.43%</div>
<div class="t" style="left:1393.40px;top:664.70px;font-size:13px;line-height:18px;color:#ffffff;">Max</div>
<div class="t" style="right:321.50px;top:664.70px;font-size:13px;line-height:18px;color:#ffffff;">15.00%</div>
<div class="t" style="left:1393.40px;top:682.20px;font-size:13px;line-height:18px;color:#ffffff;">Current</div>
<div class="t" style="right:321.50px;top:682.20px;font-size:13px;line-height:18px;color:#ffffff;">15.00%</div>
<div class="t" style="left:1393.40px;top:719.80px;font-size:13px;line-height:18px;color:#ffffff;">Min</div>
<div class="t" style="right:321.50px;top:719.80px;font-size:13px;line-height:18px;color:#ffffff;">−8.99%</div>
<div class="t" style="left:1727.80px;top:645.70px;font-size:11px;line-height:15px;color:#dbdbdb;">40.00%</div>
<div class="t" style="left:1727.80px;top:676.90px;font-size:11px;line-height:15px;color:#dbdbdb;">20.00%</div>
<div class="t" style="left:1727.80px;top:707.50px;font-size:11px;line-height:15px;color:#dbdbdb;">0.00%</div>
<div class="t" style="left:1727.80px;top:738.90px;font-size:11px;line-height:15px;color:#dbdbdb;">−20.00%</div>
<div class="t" style="left:1727.80px;top:770.70px;font-size:11px;line-height:15px;color:#dbdbdb;">−40.00%</div>
<div class="t" style="left:1727.80px;top:801.70px;font-size:11px;line-height:15px;color:#dbdbdb;">−60.00%</div>
<svg width="1815" height="1041"><circle cx="1232" cy="849" r="4" fill="#ff9800"/><circle cx="1372" cy="849" r="4" fill="#3179f5"/></svg>
<div class="abs" style="left:1720px;top:640px;width:60px;height:9.8px;background:#0f0f0f"></div>
<div class="t" style="left:1244.50px;top:839.50px;font-size:13px;line-height:18px;color:#9c9c9c;">P&amp;L for buy &amp; hold</div>
<div class="t" style="left:1384.50px;top:839.50px;font-size:13px;line-height:18px;color:#9c9c9c;">P&amp;L for strategy</div>
<div class="abs" style="left:17px;top:874px;width:1781px;height:40px;background:#1f1f1f"></div>
<div class="t" style="left:33.00px;top:884.30px;font-size:14px;line-height:20px;color:#dbdbdb;font-weight:700;">Returns</div>
<div class="t" style="left:33.00px;top:924.10px;font-size:14px;line-height:20px;color:#9c9c9c;">Metric</div>
<div class="t" style="right:1098.00px;top:924.10px;font-size:14px;line-height:20px;color:#9c9c9c;">All</div>
<div class="t" style="left:1058.00px;transform:translateX(-50%);top:924.10px;font-size:14px;line-height:20px;color:#9c9c9c;">Long</div>
<div class="t" style="left:1413.00px;transform:translateX(-50%);top:924.10px;font-size:14px;line-height:20px;color:#9c9c9c;">Short</div>
<div class="abs" style="left:17px;top:955px;width:1781px;height:1px;background:#4a4a4a"></div>
<div class="t" style="left:33.00px;top:973.90px;font-size:14px;line-height:20px;color:#dbdbdb;">Initial capital</div>
<div class="t" style="right:1098.00px;top:971.90px;font-size:14px;line-height:20px;color:#dbdbdb;">100,000.00<span style="font-size:10px;margin-left:3px">USD</span></div>
<div class="abs" style="left:17px;top:1012px;width:1781px;height:1px;background:#4a4a4a"></div>
<div class="t" style="left:33.00px;top:1031.50px;font-size:14px;line-height:20px;color:#dbdbdb;">Open P&amp;L</div>
<div class="t" style="right:1098.00px;top:1019.70px;font-size:14px;line-height:20px;color:#dbdbdb;">0<span style="font-size:10px;margin-left:3px">USD</span></div>
</body></html>
